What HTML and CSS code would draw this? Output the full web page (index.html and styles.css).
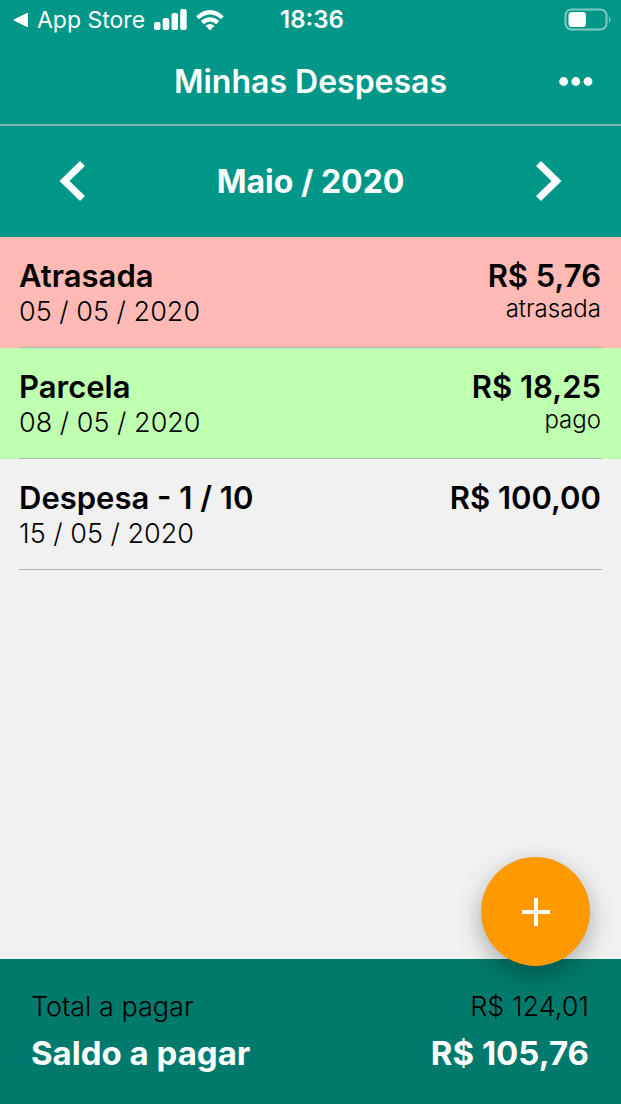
FILE: index.html
```html
<!DOCTYPE html>
<html lang="pt-BR">
<head>
<meta charset="utf-8">
<meta name="viewport" content="width=device-width, initial-scale=1">
<title>Minhas Despesas</title>
<link rel="stylesheet" href="styles.css">
</head>
<body>
<div class="app">
  <div class="status">
    <div class="status-left">
      <svg class="back-icon" width="16" height="16" viewBox="0 0 16 16" aria-hidden="true"><path d="M1.200 7.200 14 1q1-.4 1 .6v12.800q0 1-1 .6L1.200 8.800q-1.400-.8 0-1.600z"/></svg>
      <a class="back-link" href="#">App Store</a>
      <svg width="34" height="22" viewBox="0 0 34 22" aria-hidden="true"><rect x="1" y="13" width="6.500" height="8" rx="2"/><rect x="9.700" y="9" width="6.500" height="12" rx="2"/><rect x="18.500" y="4" width="6.500" height="17" rx="2"/><rect x="27.200" y="0" width="6.500" height="21" rx="2"/></svg>
      <svg class="wifi" width="30" height="22" viewBox="0 0 30 22" aria-hidden="true"><path d="M1.200 7.200Q15-5 28.800 7.200L26 10.200Q15 1 4 10.200z"/><path d="M5.800 12Q15 4.500 24.200 12l-3 3.200Q15 10 8.800 15.200z"/><path d="M10.500 16.800Q15 13.200 19.500 16.800L15 21.500z"/></svg>
    </div>
    <time class="clock">18:36</time>
    <svg class="battery" width="47" height="24" viewBox="0 0 47 24" aria-hidden="true"><rect class="battery-case" x="1.500" y="1.500" width="41" height="20" rx="6"/><path class="battery-cap" d="M45 8q3 3.500 0 7z"/><rect x="4.500" y="4" width="17.500" height="15" rx="3.500"/></svg>
  </div>

  <header class="titlebar">
    <h1 class="title">Minhas Despesas</h1>
    <button class="icon-button more" type="button" aria-label="Mais opções">
      <svg width="34" height="10" viewBox="0 0 34 10" aria-hidden="true"><circle cx="4.600" cy="4.500" r="4.400"/><circle cx="16.800" cy="4.500" r="4.400"/><circle cx="29" cy="4.500" r="4.400"/></svg>
    </button>
  </header>

  <nav class="months" aria-label="Mês">
    <button class="icon-button" type="button" aria-label="Mês anterior">
      <svg width="26" height="42" viewBox="0 0 26 42" aria-hidden="true"><path class="chevron" d="M22.500 2.500 4.500 20l18 17.500"/></svg>
    </button>
    <h2 class="month">Maio / 2020</h2>
    <button class="icon-button" type="button" aria-label="Próximo mês">
      <svg width="26" height="42" viewBox="0 0 26 42" aria-hidden="true"><path class="chevron" d="M3.500 2.500l18 17.500-18 17.500"/></svg>
    </button>
  </nav>

  <main class="content">
    <ul class="expenses">
      <li class="expense late">
        <div class="expense-body">
          <div><h3 class="name">Atrasada</h3><p class="date">05 / 05 / 2020</p></div>
          <div class="values"><p class="amount">R$ 5,76</p><p class="state">atrasada</p></div>
        </div>
      </li>
      <li class="expense paid">
        <div class="expense-body">
          <div><h3 class="name">Parcela</h3><p class="date">08 / 05 / 2020</p></div>
          <div class="values"><p class="amount">R$ 18,25</p><p class="state">pago</p></div>
        </div>
      </li>
      <li class="expense">
        <div class="expense-body">
          <div><h3 class="name">Despesa - 1 / 10</h3><p class="date">15 / 05 / 2020</p></div>
          <div class="values"><p class="amount">R$ 100,00</p></div>
        </div>
      </li>
    </ul>
  </main>

  <footer class="summary">
    <button class="add" type="button" aria-label="Adicionar despesa">
      <svg width="28" height="28" viewBox="0 0 28 28" aria-hidden="true"><path d="M12 0h4v12h12v4H16v12h-4V16H0v-4h12z"/></svg>
    </button>
    <p class="total"><span>Total a pagar</span><span>R$ 124,01</span></p>
    <p class="balance"><span>Saldo a pagar</span><span>R$ 105,76</span></p>
  </footer>
</div>
</body>
</html>
```
FILE: styles.css
```css
* {
  box-sizing: border-box;
}

body {
  margin: 0;
  background: #f1f1f1;
  color: #000;
  font-family: Inter, "Liberation Sans", sans-serif;
}

h1, h2, h3, p, ul {
  margin: 0;
  padding: 0;
}

svg {
  display: block;
  fill: #fff;
  overflow: visible;
}

.app {
  display: flex;
  flex-direction: column;
  min-height: 100vh;
}

.status {
  display: grid;
  grid-template-columns: 1fr auto 1fr;
  align-items: center;
  height: 40px;
  padding: 0 10px 0 13px;
  background: #009788;
  color: #fff;
  font-size: 23px;
  line-height: 40px;
}

.status-left {
  display: flex;
  align-items: center;
  gap: 8px;
}

.back-link {
  color: inherit;
  text-decoration: none;
}

.clock {
  font-size: 24px;
  font-weight: 600;
}

.battery {
  justify-self: end;
}

.battery-case {
  fill: none;
  stroke: #80cbc3;
  stroke-width: 2;
}

.battery-cap {
  fill: #80cbc3;
}

.titlebar {
  display: grid;
  grid-template-columns: 1fr auto 1fr;
  align-items: center;
  height: 86px;
  padding: 0 28px;
  border-bottom: 2px solid #80b5af;
  background: #009788;
  color: #fff;
}

.title {
  grid-column: 2;
  font-size: 32px;
  font-weight: 600;
  line-height: 40px;
}

.icon-button {
  padding: 0;
  border: 0;
  background: none;
  cursor: pointer;
}

.more {
  justify-self: end;
}

.months {
  display: flex;
  align-items: center;
  justify-content: space-between;
  height: 111px;
  padding: 0 60px;
  background: #009788;
  color: #fff;
}

.month {
  font-size: 32px;
  font-weight: 700;
  line-height: 40px;
}

.chevron {
  fill: none;
  stroke: #fff;
  stroke-width: 7;
}

.content {
  flex: 1;
}

.expenses {
  list-style: none;
}

.expense {
  padding: 0 19px;
}

.late {
  background: #ffbab5;
}

.paid {
  background: #beffb0;
}

.expense-body {
  display: flex;
  justify-content: space-between;
  height: 111px;
  padding: 20px 1px 0 0;
  border-bottom: 1px solid #b4b4b4;
}

.name,
.amount {
  font-size: 31px;
  font-weight: 600;
  line-height: 37px;
}

.date {
  font-size: 27px;
  font-weight: 300;
  line-height: 35px;
}

.values {
  text-align: right;
}

.state {
  font-size: 24px;
  font-weight: 300;
  line-height: 30px;
}

.summary {
  position: relative;
  padding: 24px 32px 27px 31px;
  background: #007a6c;
}

.total,
.balance {
  display: flex;
  justify-content: space-between;
  line-height: 47px;
}

.total {
  font-size: 27px;
  font-weight: 300;
}

.balance {
  color: #fff;
  font-size: 33px;
  font-weight: 700;
}

/* Floating button over the top edge of the summary */
.add {
  position: absolute;
  right: 31px;
  bottom: 138px;
  display: grid;
  place-items: center;
  width: 109px;
  height: 109px;
  padding: 0;
  border: 0;
  border-radius: 50%;
  background: #ff9900;
  box-shadow: 0 8px 24px rgba(0, 0, 0, 0.3);
  cursor: pointer;
}
```
